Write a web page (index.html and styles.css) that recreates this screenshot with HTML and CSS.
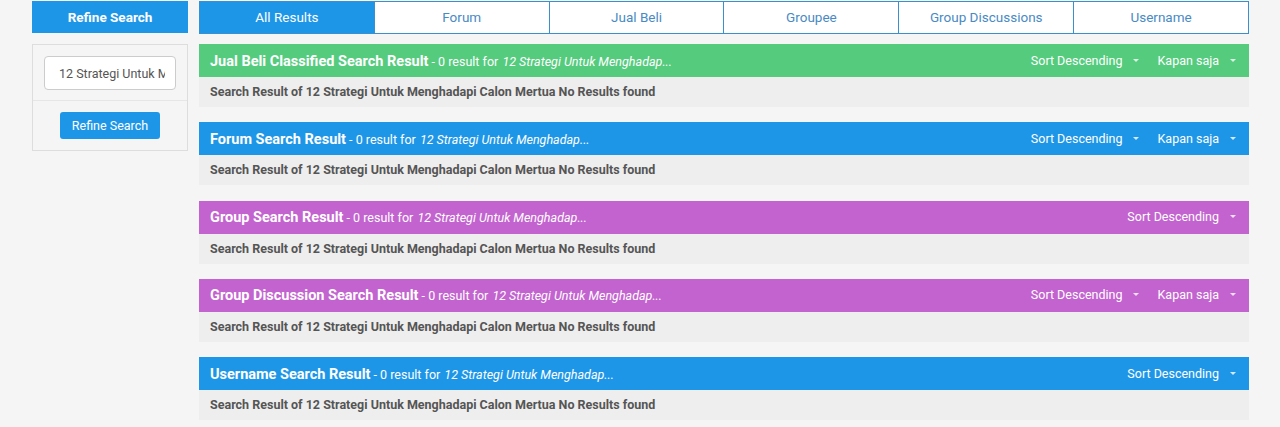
FILE: index.html
```html
<!DOCTYPE html>
<html lang="id">
<head>
<meta charset="UTF-8">
<meta name="viewport" content="width=device-width, initial-scale=1.0">
<title>Search Result</title>
<link rel="stylesheet" href="styles.css">
</head>
<body>
<div class="page">
    <aside class="sidebar">
        <div class="sidebar-title">Refine Search</div>
        <div class="sidebar-box">
            <div class="sidebar-field">
                <input type="text" class="search-input" value="12 Strategi Untuk Menghadapi Calon Mertua">
            </div>
            <div class="sidebar-action">
                <button class="refine-button">Refine Search</button>
            </div>
        </div>
    </aside>
    <main class="content">
        <nav class="tabs">
            <a class="tab active">All Results</a>
            <a class="tab">Forum</a>
            <a class="tab">Jual Beli</a>
            <a class="tab">Groupee</a>
            <a class="tab">Group Discussions</a>
            <a class="tab">Username</a>
        </nav>

        <section class="result">
            <div class="result-head green">
                <div class="result-title"><b>Jual Beli Classified Search Result</b> - 0 result for <i>12 Strategi Untuk Menghadap...</i></div>
                <div class="result-sort">
                    <span class="dropdown">Sort Descending <span class="caret"></span></span>
                    <span class="dropdown">Kapan saja <span class="caret"></span></span>
                </div>
            </div>
            <div class="result-body">Search Result of 12 Strategi Untuk Menghadapi Calon Mertua No Results found</div>
        </section>

        <section class="result">
            <div class="result-head blue">
                <div class="result-title"><b>Forum Search Result</b> - 0 result for <i>12 Strategi Untuk Menghadap...</i></div>
                <div class="result-sort">
                    <span class="dropdown">Sort Descending <span class="caret"></span></span>
                    <span class="dropdown">Kapan saja <span class="caret"></span></span>
                </div>
            </div>
            <div class="result-body">Search Result of 12 Strategi Untuk Menghadapi Calon Mertua No Results found</div>
        </section>

        <section class="result">
            <div class="result-head purple">
                <div class="result-title"><b>Group Search Result</b> - 0 result for <i>12 Strategi Untuk Menghadap...</i></div>
                <div class="result-sort">
                    <span class="dropdown">Sort Descending <span class="caret"></span></span>
                </div>
            </div>
            <div class="result-body">Search Result of 12 Strategi Untuk Menghadapi Calon Mertua No Results found</div>
        </section>

        <section class="result">
            <div class="result-head purple">
                <div class="result-title"><b>Group Discussion Search Result</b> - 0 result for <i>12 Strategi Untuk Menghadap...</i></div>
                <div class="result-sort">
                    <span class="dropdown">Sort Descending <span class="caret"></span></span>
                    <span class="dropdown">Kapan saja <span class="caret"></span></span>
                </div>
            </div>
            <div class="result-body">Search Result of 12 Strategi Untuk Menghadapi Calon Mertua No Results found</div>
        </section>

        <section class="result">
            <div class="result-head blue">
                <div class="result-title"><b>Username Search Result</b> - 0 result for <i>12 Strategi Untuk Menghadap...</i></div>
                <div class="result-sort">
                    <span class="dropdown">Sort Descending <span class="caret"></span></span>
                </div>
            </div>
            <div class="result-body">Search Result of 12 Strategi Untuk Menghadapi Calon Mertua No Results found</div>
        </section>
    </main>
</div>
</body>
</html>
```

FILE: styles.css
```css
body {
    font-family: Roboto, "Liberation Sans", Arial, sans-serif;
    background-color: #f5f5f5;
    margin: 0;
    padding: 0;
    color: #555;
}
.page {
    display: flex;
    gap: 11px;
    padding: 1px 31px 0 32px;
}
.sidebar {
    width: 156px;
    flex-shrink: 0;
}
.sidebar-title {
    height: 32px;
    line-height: 32px;
    background-color: #1e96e8;
    color: #fff;
    font-weight: bold;
    font-size: 13.5px;
    text-align: center;
}
.sidebar-box {
    margin-top: 11px;
    border: 1px solid #ddd;
    background-color: #f5f5f5;
}
.sidebar-field {
    padding: 11px 11px 10px;
    border-bottom: 1px solid #e6e6e6;
}
.search-input {
    width: 100%;
    height: 34px;
    box-sizing: border-box;
    padding: 6px 10px 6px 14px;
    border: 1px solid #ccc;
    border-radius: 4px;
    font-family: inherit;
    font-size: 12.5px;
    color: #555;
    background-color: #fff;
}
.sidebar-action {
    padding: 11px 0 11px;
    text-align: center;
}
.refine-button {
    width: 100px;
    height: 27px;
    padding: 0;
    background-color: #1e96e8;
    color: #fff;
    border: none;
    border-radius: 3px;
    font-family: inherit;
    font-size: 12.5px;
    cursor: pointer;
}
.content {
    flex: 1;
}
.tabs {
    display: flex;
    height: 33px;
    box-sizing: border-box;
    border: 1px solid #3a8fcf;
    background-color: #fff;
}
.tab {
    flex: 1;
    line-height: 31px;
    text-align: center;
    font-size: 13.5px;
    color: #4a8ac4;
    border-left: 1px solid #3a8fcf;
    cursor: pointer;
}
.tab:first-child {
    border-left: none;
}
.tab.active {
    background-color: #1e96e8;
    color: #fff;
}
.result {
    margin-top: 10px;
    margin-bottom: 15.3px;
}
.result + .result {
    margin-top: 0;
}
.result-head {
    display: flex;
    align-items: center;
    justify-content: space-between;
    height: 33px;
    box-sizing: border-box;
    padding: 1px 13px 0 11px;
    color: #fff;
    font-size: 12.5px;
}
.result-head b {
    font-size: 14.5px;
}
.result-head i {
    margin-left: 1px;
}
.green {
    background-color: #55cb7e;
}
.blue {
    background-color: #1e96e8;
}
.purple {
    background-color: #c363cf;
}
.result-sort {
    display: flex;
    gap: 18px;
    margin-top: -2px;
}
.dropdown {
    display: flex;
    align-items: center;
}
.caret {
    display: inline-block;
    width: 0;
    height: 0;
    margin-left: 11px;
    border-top: 3px solid #fff;
    border-left: 3px solid transparent;
    border-right: 3px solid transparent;
    opacity: 0.8;
}
.result-body {
    height: 30px;
    line-height: 30px;
    padding: 0 11px;
    background-color: #eeeeee;
    font-size: 12.5px;
    font-weight: bold;
    color: #555;
}
```
